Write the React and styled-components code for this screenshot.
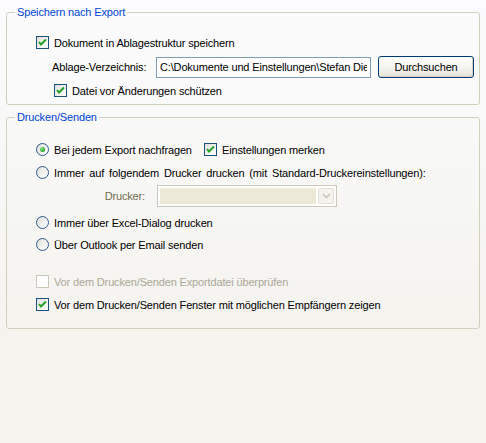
import React from 'react';
import styled, { createGlobalStyle } from 'styled-components';

const GlobalStyle = createGlobalStyle`
  html, body {
    margin: 0;
    padding: 0;
    background: #f4f3ee;
  }
  * {
    box-sizing: border-box;
  }
`;

const Page = styled.div`
  width: 486px;
  height: 443px;
  padding: 6px 6px 0 6px;
  background: linear-gradient(to bottom, #fcfcfe 0px, #f4f3ee 330px, #f4f3ee 100%);
  font-family: 'Liberation Sans', Arial, sans-serif;
  font-size: 11px;
  letter-spacing: -0.15px;
  color: #000;
  display: flex;
  flex-direction: column;
  gap: 6px;
`;

const Group = styled.fieldset`
  margin: 0;
  padding: 0 0 0 6px;
  border: 1px solid #d0d0bf;
  border-radius: 3px;
  min-inline-size: 0;
`;

const Legend = styled.legend`
  margin: 0 0 0 2px;
  padding: 0 2px;
  line-height: 13px;
  color: #0046d5;
`;

const Content = styled.div`
  display: flex;
  flex-direction: column;
  padding: ${(p) => p.$pad};
`;

const Row = styled.div`
  display: flex;
  align-items: center;
  height: ${(p) => p.$h || 17}px;
  margin-top: ${(p) => p.$mt || 0}px;
  padding-left: ${(p) => p.$indent || 0}px;
  gap: 5px;
  white-space: nowrap;
`;

const Label = styled.span`
  color: ${(p) => (p.$disabled ? '#aca899' : '#000')};
  word-spacing: ${(p) => p.$ws || 0}px;
  width: ${(p) => (p.$w ? `${p.$w}px` : 'auto')};
  flex: none;
`;

const Box = styled.span`
  width: 13px;
  height: 13px;
  flex: none;
  border: 1px solid ${(p) => (p.$disabled ? '#cac8bb' : '#1c5180')};
  background: ${(p) =>
    p.$disabled ? '#fff' : 'linear-gradient(135deg, #dcdcd7 0%, #f6f6f4 60%, #ffffff 100%)'};
  display: flex;
  align-items: center;
  justify-content: center;
`;

const Radio = styled.span`
  width: 13px;
  height: 13px;
  flex: none;
  border-radius: 50%;
  border: 1px solid #2f5a8a;
  background: linear-gradient(135deg, #dcdcd7 0%, #f4f4f2 60%, #ffffff 100%);
  display: flex;
  align-items: center;
  justify-content: center;
`;

const Dot = styled.span`
  width: 5px;
  height: 5px;
  border-radius: 50%;
  background: radial-gradient(circle at 35% 35%, #8ee58e 0%, #21a121 70%);
`;

const Field = styled.input`
  width: 215px;
  height: 21px;
  margin-left: 5px;
  border: 1px solid #7f9db9;
  background: #fff;
  padding: 0 3px;
  font: inherit;
  letter-spacing: inherit;
  color: #000;
  outline: none;
`;

const Button = styled.button`
  width: 96px;
  height: 22px;
  margin-left: 2px;
  border: 1px solid #003c74;
  border-radius: 3px;
  background: linear-gradient(to bottom, #ffffff 0%, #f4f4f0 50%, #e6e5dc 100%);
  box-shadow: inset -1px -1px 0 #d6d0c5;
  font: inherit;
  letter-spacing: inherit;
  color: #000;
  padding: 0;
`;

const DruckerLabel = styled.span`
  width: 114px;
  text-align: right;
  color: #6f6b4e;
  padding-right: 5px;
`;

const Combo = styled.div`
  width: 180px;
  height: 22px;
  margin-left: 2px;
  border: 1px solid #c9c7ba;
  background: #fff;
  padding: 2px;
  display: flex;
  gap: 2px;
`;

const ComboFill = styled.div`
  flex: 1;
  background: #ece9d8;
`;

const ComboArrow = styled.div`
  width: 16px;
  border: 1px solid #e3e1d6;
  border-radius: 2px;
  background: #f4f3ee;
  display: flex;
  align-items: center;
  justify-content: center;
`;

const Check = () => (
  <svg width="9" height="9" viewBox="0 0 9 9">
    <path d="M1 4 L3 6.5 L8 1.5" fill="none" stroke="#21a121" strokeWidth="2" />
  </svg>
);

const Checkbox = ({ checked, disabled }) => (
  <Box $disabled={disabled}>{checked && <Check />}</Box>
);

const RadioButton = ({ checked }) => <Radio>{checked && <Dot />}</Radio>;

const App = () => (
  <>
    <GlobalStyle />
    <Page>
      <Group>
        <Legend>Speichern nach Export</Legend>
        <Content $pad="15px 0 5px 23px">
          <Row>
            <Checkbox checked />
            <Label>Dokument in Ablagestruktur speichern</Label>
          </Row>
          <Row $h={22} $mt={5} $indent={16}>
            <Label $w={94}>Ablage-Verzeichnis:</Label>
            <Field readOnly value="C:\Dokumente und Einstellungen\Stefan Dietrich\Eigene Dateien" />
            <Button>Durchsuchen</Button>
          </Row>
          <Row $mt={4} $indent={18}>
            <Checkbox checked />
            <Label>Datei vor Änderungen schützen</Label>
          </Row>
        </Content>
      </Group>

      <Group>
        <Legend>Drucken/Senden</Legend>
        <Content $pad="17px 0 15px 23px">
          <Row>
            <RadioButton checked />
            <Label $w={145}>Bei jedem Export nachfragen</Label>
            <Checkbox checked />
            <Label>Einstellungen merken</Label>
          </Row>
          <Row $mt={6}>
            <RadioButton />
            <Label $ws={2}>Immer auf folgendem Drucker drucken (mit Standard-Druckereinstellungen):</Label>
          </Row>
          <Row $h={22} $mt={4}>
            <DruckerLabel>Drucker:</DruckerLabel>
            <Combo>
              <ComboFill />
              <ComboArrow>
                <svg width="9" height="6" viewBox="0 0 9 6">
                  <path d="M1 1 L4.5 4.5 L8 1" fill="none" stroke="#c9c7ba" strokeWidth="1.6" />
                </svg>
              </ComboArrow>
            </Combo>
          </Row>
          <Row $mt={7}>
            <RadioButton />
            <Label>Immer über Excel-Dialog drucken</Label>
          </Row>
          <Row $mt={5}>
            <RadioButton />
            <Label>Über Outlook per Email senden</Label>
          </Row>
          <Row $mt={20}>
            <Checkbox disabled />
            <Label $disabled>Vor dem Drucken/Senden Exportdatei überprüfen</Label>
          </Row>
          <Row $mt={6}>
            <Checkbox checked />
            <Label>Vor dem Drucken/Senden Fenster mit möglichen Empfängern zeigen</Label>
          </Row>
        </Content>
      </Group>
    </Page>
  </>
);

export default App;
